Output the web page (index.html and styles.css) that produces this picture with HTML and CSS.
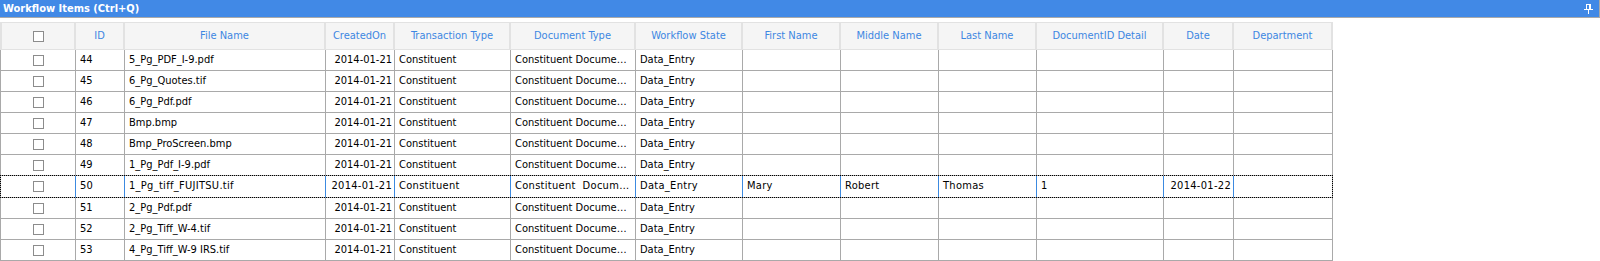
FILE: index.html
```
<!DOCTYPE html>
<html>
<head>
<link rel="stylesheet" href="styles.css">
</head>
<body>

<div class="panelTitle">
	<span class="panelTitleText">Workflow Items (Ctrl+Q)</span>
	<svg class="pinIcon" width="9" height="10" viewBox="0 0 9 10">
		<rect x="2.5" y="0.5" width="4" height="5" fill="none" stroke="#fff"/>
		<rect x="5" y="0" width="2" height="6" fill="#fff"/>
		<rect x="0" y="5" width="9" height="1" fill="#fff"/>
		<rect x="4" y="6" width="1" height="4" fill="#fff"/>
	</svg>
</div>

<div class="grid">

	<div class="gridRow headerRow">
		<div class="cell checkCell"><span class="checkBox"></span></div>
		<div class="cell">ID</div>
		<div class="cell">File Name</div>
		<div class="cell">CreatedOn</div>
		<div class="cell">Transaction Type</div>
		<div class="cell">Document Type</div>
		<div class="cell">Workflow State</div>
		<div class="cell">First Name</div>
		<div class="cell">Middle Name</div>
		<div class="cell">Last Name</div>
		<div class="cell">DocumentID Detail</div>
		<div class="cell">Date</div>
		<div class="cell">Department</div>
	</div>

	<div class="gridRow">
		<div class="cell checkCell"><span class="checkBox"></span></div>
		<div class="cell">44</div>
		<div class="cell">5_Pg_PDF_I-9.pdf</div>
		<div class="cell right">2014-01-21</div>
		<div class="cell">Constituent</div>
		<div class="cell">Constituent Docume…</div>
		<div class="cell">Data_Entry</div>
		<div class="cell"></div>
		<div class="cell"></div>
		<div class="cell"></div>
		<div class="cell"></div>
		<div class="cell right"></div>
		<div class="cell"></div>
	</div>

	<div class="gridRow">
		<div class="cell checkCell"><span class="checkBox"></span></div>
		<div class="cell">45</div>
		<div class="cell">6_Pg_Quotes.tif</div>
		<div class="cell right">2014-01-21</div>
		<div class="cell">Constituent</div>
		<div class="cell">Constituent Docume…</div>
		<div class="cell">Data_Entry</div>
		<div class="cell"></div>
		<div class="cell"></div>
		<div class="cell"></div>
		<div class="cell"></div>
		<div class="cell right"></div>
		<div class="cell"></div>
	</div>

	<div class="gridRow">
		<div class="cell checkCell"><span class="checkBox"></span></div>
		<div class="cell">46</div>
		<div class="cell">6_Pg_Pdf.pdf</div>
		<div class="cell right">2014-01-21</div>
		<div class="cell">Constituent</div>
		<div class="cell">Constituent Docume…</div>
		<div class="cell">Data_Entry</div>
		<div class="cell"></div>
		<div class="cell"></div>
		<div class="cell"></div>
		<div class="cell"></div>
		<div class="cell right"></div>
		<div class="cell"></div>
	</div>

	<div class="gridRow">
		<div class="cell checkCell"><span class="checkBox"></span></div>
		<div class="cell">47</div>
		<div class="cell">Bmp.bmp</div>
		<div class="cell right">2014-01-21</div>
		<div class="cell">Constituent</div>
		<div class="cell">Constituent Docume…</div>
		<div class="cell">Data_Entry</div>
		<div class="cell"></div>
		<div class="cell"></div>
		<div class="cell"></div>
		<div class="cell"></div>
		<div class="cell right"></div>
		<div class="cell"></div>
	</div>

	<div class="gridRow">
		<div class="cell checkCell"><span class="checkBox"></span></div>
		<div class="cell">48</div>
		<div class="cell">Bmp_ProScreen.bmp</div>
		<div class="cell right">2014-01-21</div>
		<div class="cell">Constituent</div>
		<div class="cell">Constituent Docume…</div>
		<div class="cell">Data_Entry</div>
		<div class="cell"></div>
		<div class="cell"></div>
		<div class="cell"></div>
		<div class="cell"></div>
		<div class="cell right"></div>
		<div class="cell"></div>
	</div>

	<div class="gridRow">
		<div class="cell checkCell"><span class="checkBox"></span></div>
		<div class="cell">49</div>
		<div class="cell">1_Pg_Pdf_I-9.pdf</div>
		<div class="cell right">2014-01-21</div>
		<div class="cell">Constituent</div>
		<div class="cell">Constituent Docume…</div>
		<div class="cell">Data_Entry</div>
		<div class="cell"></div>
		<div class="cell"></div>
		<div class="cell"></div>
		<div class="cell"></div>
		<div class="cell right"></div>
		<div class="cell"></div>
	</div>

	<div class="gridRow selectedRow">
		<div class="cell checkCell"><span class="checkBox"></span></div>
		<div class="cell">50</div>
		<div class="cell">1_Pg_tiff_FUJITSU.tif</div>
		<div class="cell right">2014-01-21</div>
		<div class="cell">Constituent</div>
		<div class="cell">Constituent  Docum…</div>
		<div class="cell">Data_Entry</div>
		<div class="cell">Mary</div>
		<div class="cell">Robert</div>
		<div class="cell">Thomas</div>
		<div class="cell">1</div>
		<div class="cell right">2014-01-22</div>
		<div class="cell"></div>
	</div>

	<div class="gridRow">
		<div class="cell checkCell"><span class="checkBox"></span></div>
		<div class="cell">51</div>
		<div class="cell">2_Pg_Pdf.pdf</div>
		<div class="cell right">2014-01-21</div>
		<div class="cell">Constituent</div>
		<div class="cell">Constituent Docume…</div>
		<div class="cell">Data_Entry</div>
		<div class="cell"></div>
		<div class="cell"></div>
		<div class="cell"></div>
		<div class="cell"></div>
		<div class="cell right"></div>
		<div class="cell"></div>
	</div>

	<div class="gridRow">
		<div class="cell checkCell"><span class="checkBox"></span></div>
		<div class="cell">52</div>
		<div class="cell">2_Pg_Tiff_W-4.tif</div>
		<div class="cell right">2014-01-21</div>
		<div class="cell">Constituent</div>
		<div class="cell">Constituent Docume…</div>
		<div class="cell">Data_Entry</div>
		<div class="cell"></div>
		<div class="cell"></div>
		<div class="cell"></div>
		<div class="cell"></div>
		<div class="cell right"></div>
		<div class="cell"></div>
	</div>

	<div class="gridRow">
		<div class="cell checkCell"><span class="checkBox"></span></div>
		<div class="cell">53</div>
		<div class="cell">4_Pg_Tiff_W-9 IRS.tif</div>
		<div class="cell right">2014-01-21</div>
		<div class="cell">Constituent</div>
		<div class="cell">Constituent Docume…</div>
		<div class="cell">Data_Entry</div>
		<div class="cell"></div>
		<div class="cell"></div>
		<div class="cell"></div>
		<div class="cell"></div>
		<div class="cell right"></div>
		<div class="cell"></div>
	</div>

</div>

</body>
</html>
```

FILE: styles.css
```
body {
	margin: 0;
	background: #ffffff;
	font-family: "DejaVu Sans Condensed", "DejaVu Sans", sans-serif;
	font-size: 11px;
	color: #000000;
}

.panelTitle {
	display: flex;
	justify-content: space-between;
	align-items: center;
	height: 17px;
	padding: 0 6px 0 3px;
	background: #4189e6;
	border-bottom: 1px solid #a9a9a9;
	border-right: 1px solid #a9a9a9;
}

.panelTitleText {
	color: #ffffff;
	font-weight: bold;
	font-size: 11px;
}

.pinIcon {
	display: block;
}

.grid {
	margin-top: 4px;
	width: 1333px;
}

.gridRow {
	display: grid;
	grid-template-columns: 76px 49px 201px 69px 116px 125px 107px 98px 98px 98px 127px 70px 99px;
	height: 21px;
}

.cell {
	box-sizing: border-box;
	padding: 0 4px;
	line-height: 20px;
	border-right: 1px solid #a9a9a9;
	border-bottom: 1px solid #a9a9a9;
	white-space: pre;
	overflow: hidden;
	text-overflow: ellipsis;
	min-width: 0;
}

.cell.right {
	text-align: right;
	padding-right: 2px;
}

.checkCell {
	display: flex;
	justify-content: center;
	align-items: center;
	border-left: 1px solid #a9a9a9;
}

.checkBox {
	display: block;
	box-sizing: border-box;
	width: 11px;
	height: 11px;
	border: 1px solid #8c8c8c;
	background: #ffffff;
}

.headerRow {
	height: 28px;
	background: #f5f5f5;
	border-top: 1px solid #e2e2e2;
	box-sizing: border-box;
}

.headerRow .cell {
	line-height: 26px;
	text-align: center;
	color: #3d87e2;
	border-right: 2px solid #e2e2e2;
	border-bottom: 1px solid #e2e2e2;
}

.headerRow .checkCell {
	border-left: 2px solid #e2e2e2;
}

.selectedRow {
	margin-top: -1px;
	height: 22px;
	border-top: 1px solid #3c8ae0;
	outline: 1px dotted #000000;
	outline-offset: -1px;
	letter-spacing: 0.3px;
}

.selectedRow .cell {
	border-right-color: #3c8ae0;
}

.selectedRow .cell:last-child {
	border-right-color: #a9a9a9;
}
```
